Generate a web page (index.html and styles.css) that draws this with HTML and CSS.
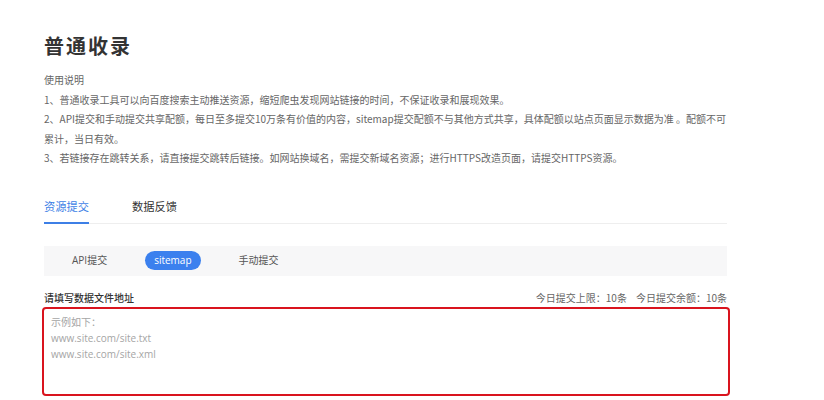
FILE: index.html
```html
<!DOCTYPE html>
<html lang="zh-CN">
<head>
<meta charset="utf-8">
<title>普通收录</title>
<link rel="stylesheet" href="styles.css">
</head>
<body>
<div class="page">
  <h1 class="title">普通收录</h1>
  <div class="desc">
    <p>使用说明</p>
    <p>1、普通收录工具可以向百度搜索主动推送资源，缩短爬虫发现网站链接的时间，不保证收录和展现效果。</p>
    <p>2、API提交和手动提交共享配额，每日至多提交10万条有价值的内容，sitemap提交配额不与其他方式共享，具体配额以站点页面显示数据为准 。配额不可累计，当日有效。</p>
    <p>3、若链接存在跳转关系，请直接提交跳转后链接。如网站换域名，需提交新域名资源；进行HTTPS改造页面，请提交HTTPS资源。</p>
  </div>
  <div class="tabs">
    <span class="tab active">资源提交</span>
    <span class="tab">数据反馈</span>
  </div>
  <div class="subtabs">
    <span class="subtab">API提交</span>
    <span class="subtab on">sitemap</span>
    <span class="subtab">手动提交</span>
  </div>
  <div class="field-head">
    <span class="label">请填写数据文件地址</span>
    <span class="quota"><span>今日提交上限：10条</span><span class="gap">今日提交余额：10条</span></span>
  </div>
  <textarea class="input" placeholder="示例如下：&#10;www.site.com/site.txt&#10;www.site.com/site.xml"></textarea>
</div>
</body>
</html>
```
FILE: styles.css
```css
html, body {
  margin: 0;
  padding: 0;
  background: #fff;
}
body {
  font-family: "Noto Sans CJK SC", "Open Sans", sans-serif;
  color: #666;
}
.page {
  width: 683px;
  padding: 31px 0 0 44px;
}
.title {
  margin: 0;
  font-size: 20px;
  line-height: 30px;
  letter-spacing: 2px;
  font-weight: 700;
  color: #333;
}
.desc {
  margin-top: 9px;
  font-size: 10px;
  line-height: 19.6px;
  color: #666;
}
.desc p {
  margin: 0;
}
.tabs {
  margin-top: 24px;
  display: flex;
  gap: 43px;
  border-bottom: 1px solid #eeeeee;
}
.tab {
  font-size: 11.25px;
  line-height: 20px;
  padding: 4px 0 6px;
  border-bottom: 2px solid transparent;
  margin-bottom: -1px;
  color: #333;
}
.tab.active {
  color: #3d7fe6;
  border-bottom-color: #3d7fe6;
}
.subtabs {
  margin-top: 22px;
  height: 30px;
  background: #f7f7f8;
  display: flex;
  align-items: center;
  gap: 29px;
  padding-left: 19px;
}
.subtab {
  font-family: "Open Sans", "Noto Sans CJK SC", sans-serif;
  font-size: 10px;
  line-height: 19px;
  padding: 0 9px;
  border-radius: 10px;
  color: #555;
}
.subtab.on {
  background: #3b80ee;
  color: #fff;
}
.field-head {
  margin-top: 13px;
  display: flex;
  justify-content: space-between;
  align-items: center;
  line-height: 18px;
  font-size: 10px;
}
.label {
  color: #333;
  font-weight: 500;
}
.quota {
  color: #666;
}
.quota .gap {
  margin-left: 9px;
}
.input {
  display: block;
  box-sizing: border-box;
  margin: 0 0 0 -2px;
  width: 688px;
  height: 89px;
  border: 2px solid #d9141e;
  border-radius: 4px;
  padding: 5px 7px;
  font-family: "Open Sans", "Noto Sans CJK SC", sans-serif;
  font-size: 10px;
  line-height: 16px;
  resize: none;
  outline: none;
  background: #fff;
}
.input::placeholder {
  color: #a5a5a5;
}
```
